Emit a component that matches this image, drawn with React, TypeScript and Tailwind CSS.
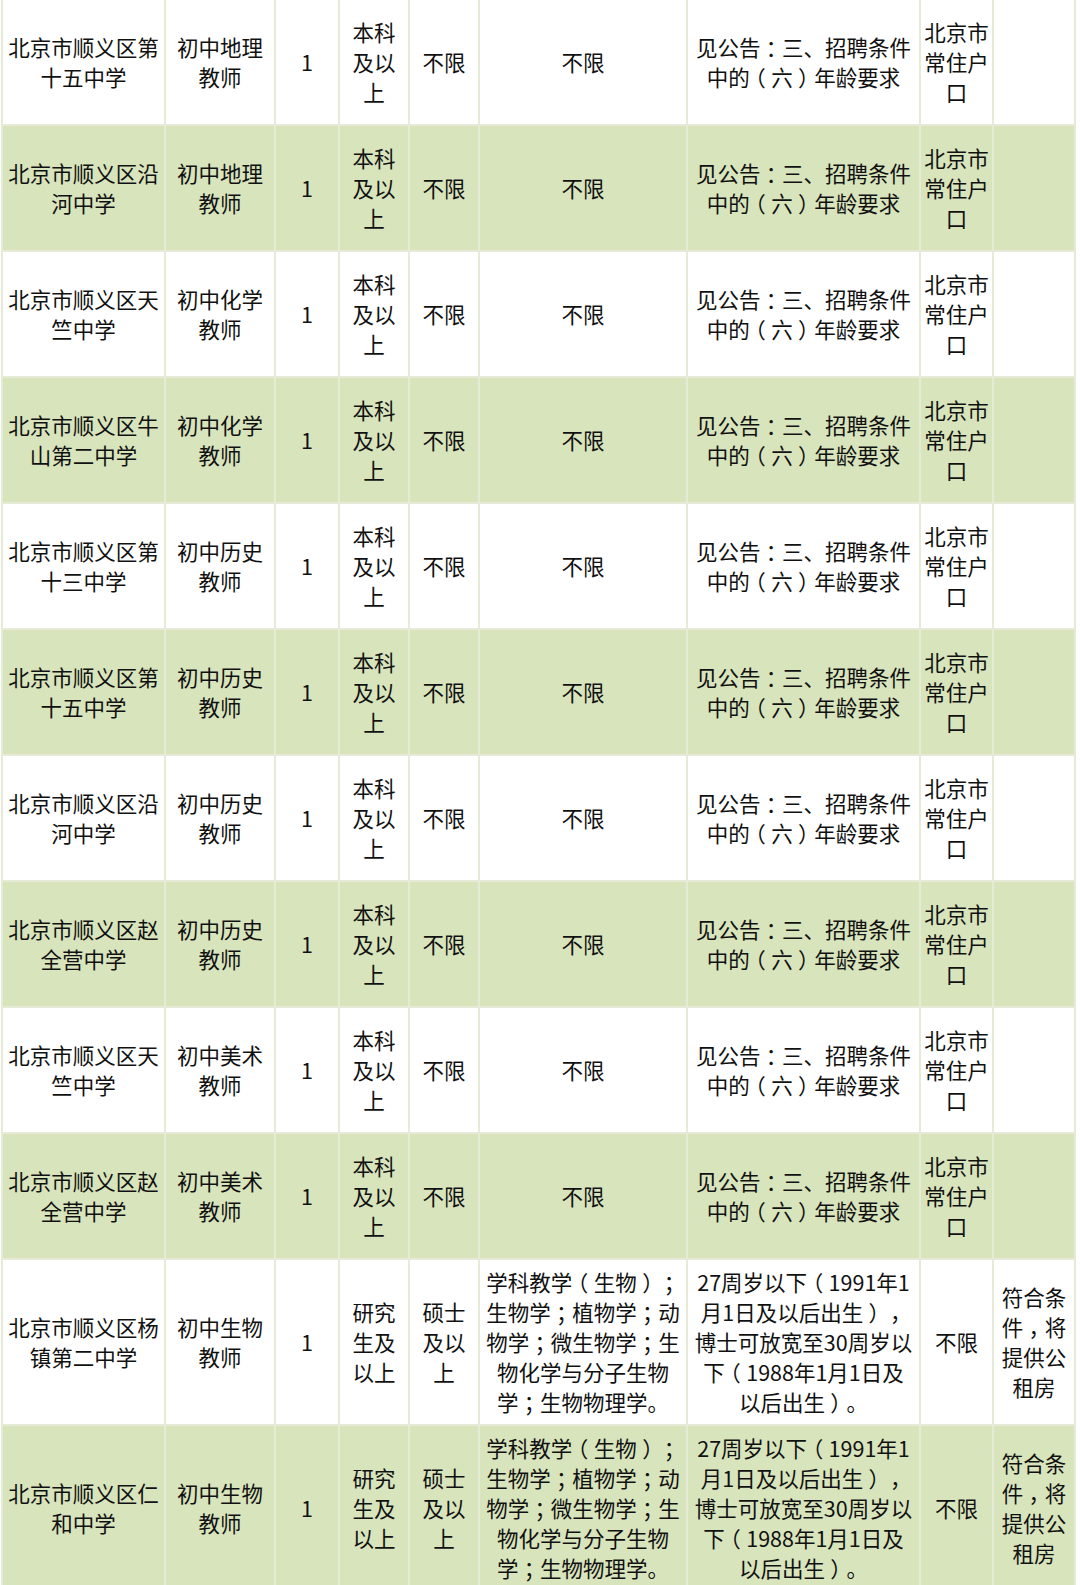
import React from "react";

type Row = {
  c1: string[];
  c2: string[];
  c4: string[];
  c5: string[];
  c6: string[];
  c7: string[];
  c8: string[];
  c9: string[];
  tall?: boolean;
};

const std = (school: string[], job: string): Row => ({
  c1: school,
  c2: [job, "教师"],
  c4: ["本科", "及以", "上"],
  c5: ["不限"],
  c6: ["不限"],
  c7: ["见公告：三、招聘条件", "中的（六）年龄要求"],
  c8: ["北京市", "常住户", "口"],
  c9: [],
});

const bio = (school: string[]): Row => ({
  c1: school,
  c2: ["初中生物", "教师"],
  c4: ["研究", "生及", "以上"],
  c5: ["硕士", "及以", "上"],
  c6: [
    "学科教学（生物）；",
    "生物学；植物学；动",
    "物学；微生物学；生",
    "物化学与分子生物",
    "学；生物物理学。",
  ],
  c7: [
    "27周岁以下（1991年1",
    "月1日及以后出生），",
    "博士可放宽至30周岁以",
    "下（1988年1月1日及",
    "以后出生）。",
  ],
  c8: ["不限"],
  c9: ["符合条", "件，将", "提供公", "租房"],
  tall: true,
});

const rows: Row[] = [
  std(["北京市顺义区第", "十五中学"], "初中地理"),
  std(["北京市顺义区沿", "河中学"], "初中地理"),
  std(["北京市顺义区天", "竺中学"], "初中化学"),
  std(["北京市顺义区牛", "山第二中学"], "初中化学"),
  std(["北京市顺义区第", "十三中学"], "初中历史"),
  std(["北京市顺义区第", "十五中学"], "初中历史"),
  std(["北京市顺义区沿", "河中学"], "初中历史"),
  std(["北京市顺义区赵", "全营中学"], "初中历史"),
  std(["北京市顺义区天", "竺中学"], "初中美术"),
  std(["北京市顺义区赵", "全营中学"], "初中美术"),
  bio(["北京市顺义区杨", "镇第二中学"]),
  bio(["北京市顺义区仁", "和中学"]),
];

const CENTERED = "（）：；，";

function Line({ text }: { text: string }) {
  const parts: React.ReactNode[] = [];
  let buf = "";
  let k = 0;
  for (const ch of text) {
    if (CENTERED.includes(ch)) {
      if (buf) {
        parts.push(<React.Fragment key={k++}>{buf}</React.Fragment>);
        buf = "";
      }
      parts.push(
        <span key={k++} className="inline-block w-[1em] text-center">
          <span className="[font-feature-settings:'halt']">{ch}</span>
        </span>
      );
    } else {
      buf += ch;
    }
  }
  if (buf) parts.push(<React.Fragment key={k++}>{buf}</React.Fragment>);
  return <span className="block leading-[30px]">{parts}</span>;
}

function Cell({ lines, green, extra = "" }: { lines: string[]; green: boolean; extra?: string }) {
  return (
    <div
      className={`flex flex-col items-center justify-center text-center whitespace-nowrap overflow-visible ${
        green ? "bg-[#d8e4bc]" : "bg-white"
      } ${extra}`}
    >
      {lines.map((l, i) => (
        <Line key={i} text={l} />
      ))}
    </div>
  );
}

export default function App() {
  return (
    <div
      className="w-[1080px] h-[1585px] overflow-hidden bg-white text-[21.5px] text-[#111111]"
      style={{ fontFamily: '"Noto Sans CJK SC", "Noto Sans", sans-serif' }}
    >
      <div className="ml-px w-[1075px] bg-[#e6ebd8] px-[2px] pb-[2px]">
        <div className="grid grid-cols-[161px_108px_62px_68px_68px_206px_231px_71px_80px] gap-[2px]">
          {rows.map((r, idx) => {
            const green = idx % 2 === 1;
            const h = r.tall ? "h-[164px]" : "h-[124px]";
            return (
              <React.Fragment key={idx}>
                <Cell lines={r.c1} green={green} extra={h} />
                <Cell lines={r.c2} green={green} extra={h} />
                <Cell lines={["1"]} green={green} extra={h} />
                <Cell lines={r.c4} green={green} extra={h} />
                <Cell lines={r.c5} green={green} extra={h} />
                <Cell lines={r.c6} green={green} extra={h} />
                <Cell lines={r.c7} green={green} extra={h} />
                <Cell lines={r.c8} green={green} extra={h} />
                <Cell lines={r.c9} green={green} extra={h} />
              </React.Fragment>
            );
          })}
        </div>
      </div>
    </div>
  );
}
